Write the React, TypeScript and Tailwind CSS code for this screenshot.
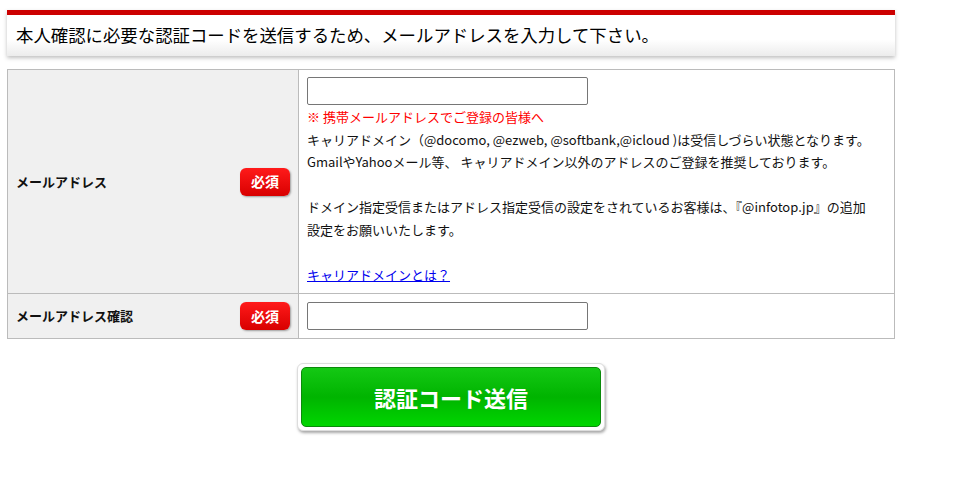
const jp = { fontFamily: '"MS PGothic", "Noto Sans CJK JP", sans-serif' };

function Badge() {
  return (
    <span className="inline-flex h-[28px] w-[50px] items-center justify-center rounded-[6px] bg-[linear-gradient(#ff1a1a,#d80000)] text-[14px] font-bold text-white shadow-[1px_1px_2px_rgba(0,0,0,0.35)]">
      必須
    </span>
  );
}

function EmailInput() {
  return (
    <input
      type="text"
      className="block h-[28px] w-[281px] rounded-[2px] border border-[#767676] bg-white px-1 outline-none"
    />
  );
}

export default function App() {
  return (
    <div className="min-h-screen bg-white pt-[10px] text-[#111]" style={jp}>
      <div className="ml-[7px] w-[888px] border-t-[5px] border-[#cc0000] bg-[linear-gradient(#fff_0%,#fff_60%,#ececec_100%)] px-[9px] pt-[7px] pb-[9px] shadow-[0_2px_4px_rgba(0,0,0,0.25)]">
        <h1 className="text-[17.4px] leading-[25px] font-normal text-black">
          本人確認に必要な認証コードを送信するため、メールアドレスを入力して下さい。
        </h1>
      </div>

      <table className="mt-[13px] ml-[7px] w-[888px] border-collapse text-[13px]">
        <tbody>
          <tr>
            <th className="w-[291px] border border-[#bbb] bg-[#f0f0f0] px-[8px] text-left font-bold">
              <div className="flex items-center justify-between">
                <span>メールアドレス</span>
                <Badge />
              </div>
            </th>
            <td className="border border-[#bbb] px-[8px] py-[7px] leading-[22.5px]">
              <EmailInput />
              <p className="pt-[1px] text-[#ff0000]">※ 携帯メールアドレスでご登録の皆様へ</p>
              <p>キャリアドメイン（@docomo, @ezweb, @softbank,@icloud )は受信しづらい状態となります。</p>
              <p>GmailやYahooメール等、 キャリアドメイン以外のアドレスのご登録を推奨しております。</p>
              <p>&nbsp;</p>
              <p>ドメイン指定受信またはアドレス指定受信の設定をされているお客様は、『@infotop.jp』の追加</p>
              <p>設定をお願いいたします。</p>
              <p>&nbsp;</p>
              <p>
                <a href="#" className="text-[#0000ee] underline">
                  キャリアドメインとは？
                </a>
              </p>
            </td>
          </tr>
          <tr>
            <th className="border border-[#bbb] bg-[#f0f0f0] px-[8px] text-left font-bold">
              <div className="flex items-center justify-between">
                <span>メールアドレス確認</span>
                <Badge />
              </div>
            </th>
            <td className="border border-[#bbb] px-[8px] py-[8px]">
              <EmailInput />
            </td>
          </tr>
        </tbody>
      </table>

      <div className="mt-[24px] ml-[7px] flex w-[888px] justify-center">
        <div className="rounded-[6px] border border-[#ddd] bg-white p-[3px] shadow-[1px_2px_3px_rgba(0,0,0,0.35)]">
          <button className="flex h-[60px] w-[300px] items-center justify-center rounded-[5px] border border-[#0a8a0a] bg-[linear-gradient(#14c814_0%,#00b400_50%,#00d600_100%)] text-[22px] font-bold text-white">
            認証コード送信
          </button>
        </div>
      </div>
    </div>
  );
}
